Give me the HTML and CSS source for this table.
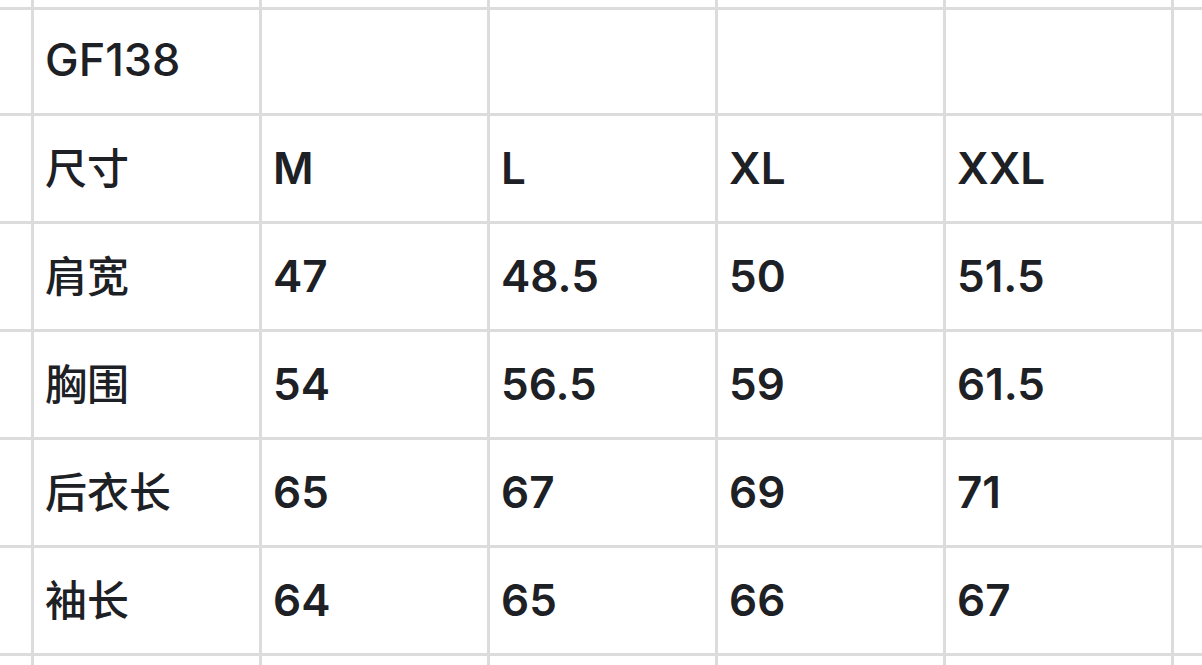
FILE: index.html
```html
<!DOCTYPE html>
<html lang="zh">
<head>
<meta charset="utf-8">
<link rel="stylesheet" href="styles.css">
</head>
<body>
<div class="sheet">
  <div class="c"></div><div class="c"></div><div class="c"></div><div class="c"></div><div class="c"></div><div class="c"></div><div class="c"></div>

  <div class="c"></div><div class="c t med">GF138</div><div class="c"></div><div class="c"></div><div class="c"></div><div class="c"></div><div class="c"></div>

  <div class="c"></div><div class="c t zh">尺寸</div><div class="c t">M</div><div class="c t">L</div><div class="c t">XL</div><div class="c t">XXL</div><div class="c"></div>

  <div class="c"></div><div class="c t zh">肩宽</div><div class="c t">47</div><div class="c t">48.5</div><div class="c t">50</div><div class="c t">51.5</div><div class="c"></div>

  <div class="c"></div><div class="c t zh">胸围</div><div class="c t">54</div><div class="c t">56.5</div><div class="c t">59</div><div class="c t">61.5</div><div class="c"></div>

  <div class="c"></div><div class="c t zh">后衣长</div><div class="c t">65</div><div class="c t">67</div><div class="c t">69</div><div class="c t">71</div><div class="c"></div>

  <div class="c"></div><div class="c t zh">袖长</div><div class="c t">64</div><div class="c t">65</div><div class="c t">66</div><div class="c t">67</div><div class="c"></div>

  <div class="c"></div><div class="c"></div><div class="c"></div><div class="c"></div><div class="c"></div><div class="c"></div><div class="c"></div>
</div>
</body>
</html>
```

FILE: styles.css
```css
html, body {
  margin: 0;
  padding: 0;
  background: #ffffff;
  overflow: hidden;
}

.sheet {
  display: grid;
  grid-template-columns: 31px repeat(5, 225px) 1fr;
  grid-template-rows: 7px 103px repeat(5, 105px) 1fr;
  gap: 3px;
  background: #dcdcdc;
  width: 100vw;
  height: 100vh;
}

.c {
  background: #ffffff;
  display: flex;
  align-items: center;
  padding-left: 11px;
  font-family: Inter, "Noto Sans CJK SC", sans-serif;
  font-size: 44px;
  line-height: 1;
  font-weight: 600;
  color: #1d2024;
  overflow: hidden;
  white-space: nowrap;
}

.t {
  padding-bottom: 2px;
}

.med {
  font-weight: 500;
  font-size: 45px;
  padding-bottom: 5px;
}

.zh {
  font-family: "Noto Sans CJK SC", sans-serif;
  font-size: 42px;
  font-weight: 500;
  padding-left: 11px;
  padding-bottom: 5px;
}
```
